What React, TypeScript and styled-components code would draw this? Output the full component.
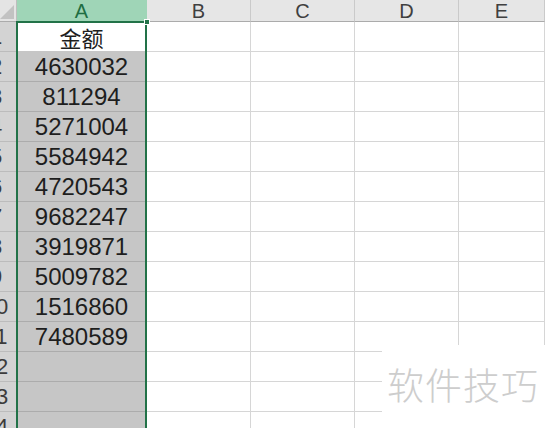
import React from "react";
import styled, { createGlobalStyle, css } from "styled-components";

const GlobalStyle = createGlobalStyle`
  html, body { margin: 0; padding: 0; background: #ffffff; overflow: hidden; }
  * { box-sizing: border-box; }
`;

const Sheet = styled.div`
  position: relative;
  width: 545px;
  height: 428px;
  overflow: hidden;
  display: grid;
  grid-template-columns: 17px 130px 104px 104px 104px 1fr;
  grid-template-rows: 22px;
  grid-auto-rows: 30px;
  background: #ffffff;
  font-family: "Liberation Sans", Arial, sans-serif;
`;

const Corner = styled.div`
  position: relative;
  background: #e4e4e4;
  border-right: 1px solid #bdbdbd;
  border-bottom: 1px solid #ababab;
  &::after {
    content: "";
    position: absolute;
    right: 2px;
    bottom: 2px;
    width: 14px;
    height: 14px;
    background: #c2c2c2;
    clip-path: polygon(100% 0, 100% 100%, 0 100%);
  }
`;

const ColHeader = styled.div<{ $active?: boolean }>`
  display: flex;
  align-items: center;
  justify-content: center;
  font-size: 20px;
  line-height: 1;
  padding-top: 1px;
  color: #404040;
  background: #e6e6e6;
  border-right: 1px solid #cacaca;
  border-bottom: 1px solid #ababab;
  ${(p) =>
    p.$active &&
    css`
      background: #9fd5b7;
      color: #1f6e43;
      border-right-color: #9fd5b7;
    `}
`;

const RowHeader = styled.div`
  display: flex;
  justify-content: flex-end;
  align-items: center;
  overflow: hidden;
  background: #d3d3d3;
  border-right: 1px solid #b8b8b8;
  border-bottom: 1px solid #bcbcbc;
  color: #3c3c3c;
  font-size: 22px;
`;

const RowLabel = styled.span`
  flex: 0 0 40px;
  text-align: center;
  white-space: nowrap;
`;

const Cell = styled.div<{ $selected?: boolean; $active?: boolean }>`
  display: flex;
  align-items: center;
  justify-content: center;
  border-right: 1px solid #d6d6d6;
  border-bottom: 1px solid #d6d6d6;
  font-size: 24px;
  color: #1e1e1e;
  white-space: nowrap;
  ${(p) =>
    p.$selected &&
    css`
      background: #c6c6c6;
      border-bottom-color: #acacac;
    `}
  ${(p) =>
    p.$active &&
    css`
      background: #ffffff;
      border-bottom-color: #c6c6c6;
      font-family: "Noto Sans CJK SC", "Liberation Sans", sans-serif;
      font-size: 22px;
    `}
`;

const Selection = styled.div`
  position: absolute;
  left: 16px;
  top: 21px;
  width: 131px;
  height: 440px;
  border: 2px solid #227248;
  pointer-events: none;
`;

const FillHandle = styled.div`
  position: absolute;
  left: 144px;
  top: 19px;
  width: 6px;
  height: 6px;
  background: #227248;
  border: 1px solid #ffffff;
`;

const Watermark = styled.div`
  position: absolute;
  right: 0;
  bottom: 0;
  width: 163px;
  height: 83px;
  background: #ffffff;
  display: flex;
  align-items: center;
  justify-content: flex-end;
  padding: 0 6px 6px 0;
  font-family: "Noto Sans CJK SC", sans-serif;
  font-size: 37px;
  font-weight: 300;
  letter-spacing: 1px;
  color: #cdcdcd;
`;

const columns = ["A", "B", "C", "D", "E"];
const values = [
  "金额",
  "4630032",
  "811294",
  "5271004",
  "5584942",
  "4720543",
  "9682247",
  "3919871",
  "5009782",
  "1516860",
  "7480589",
  "",
  "",
  "",
];

export default function App() {
  return (
    <>
      <GlobalStyle />
      <Sheet>
        <Corner />
        {columns.map((c, i) => (
          <ColHeader key={c} $active={i === 0}>
            {c}
          </ColHeader>
        ))}
        {values.map((v, r) => (
          <React.Fragment key={r}>
            <RowHeader>
              <RowLabel>{r + 1}</RowLabel>
            </RowHeader>
            <Cell $selected $active={r === 0}>
              {v}
            </Cell>
            <Cell />
            <Cell />
            <Cell />
            <Cell />
          </React.Fragment>
        ))}
        <Selection />
        <FillHandle />
        <Watermark>软件技巧</Watermark>
      </Sheet>
    </>
  );
}
